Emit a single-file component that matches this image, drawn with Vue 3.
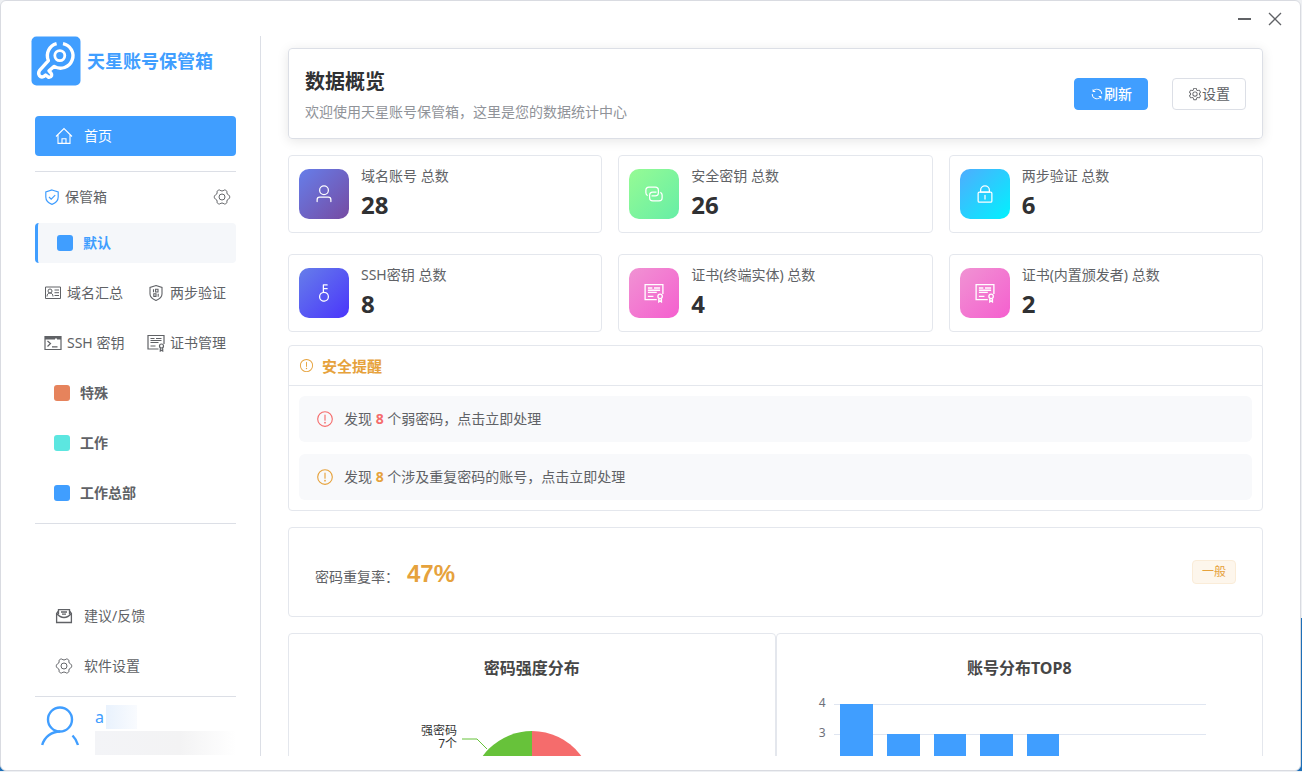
<template>
  <div class="window">
    <header class="titlebar">
      <button class="win-btn" type="button" aria-label="最小化">
        <Icon name="minus" :size="16" />
      </button>
      <button class="win-btn" type="button" aria-label="关闭">
        <Icon name="close" :size="16" />
      </button>
    </header>

    <div class="layout">
      <aside class="sidebar">
        <div class="brand">
          <svg class="logo" viewBox="0 0 50 50" aria-hidden="true">
            <rect x="0.5" y="0.5" width="49" height="49" rx="5" fill="#409eff" />
            <g fill="none" stroke="#fff" stroke-linejoin="round">
              <path
                stroke-width="3.4"
                d="M25.600 7.600A12.400 12.400 0 0 0 17.400 24.600L8.600 34.400Q6.800 37.200 8.400 39.600Q10.200 41.800 12.600 40.600L14.600 39L17.400 41.200Q19.800 41.600 20.600 39.600Q21 38.400 19.800 36.800L18 34.800L23.200 30.400A12.400 12.400 0 1 0 32 7.600"
              />
              <circle cx="28.800" cy="19.600" r="5" stroke-width="2.800" />
            </g>
          </svg>
          <span class="brand-name">天星账号保管箱</span>
        </div>

        <nav class="menu">
          <a class="menu-item home" href="#">
            <Icon name="home" :size="18" />
            <span>首页</span>
          </a>
          <hr class="divider" />

          <div class="vault-head">
            <Icon class="vault-icon" name="shield" :size="16" />
            <span>保管箱</span>
            <button class="vault-setting" type="button" aria-label="保管箱设置">
              <Icon name="gear" :size="18" />
            </button>
          </div>

          <div class="vault-list">
            <a class="vault active" href="#">
              <i class="swatch blue"></i>
              <span>默认</span>
            </a>
            <div class="shortcuts">
              <a v-for="item in shortcuts" :key="item.text" class="shortcut" href="#">
                <Icon :name="item.icon" :size="18" />
                <span>{{ item.text }}</span>
              </a>
            </div>
            <a v-for="vault in vaults" :key="vault.name" class="vault" href="#">
              <i class="swatch" :class="vault.color"></i>
              <span>{{ vault.name }}</span>
            </a>
          </div>
          <hr class="divider list-end" />

          <div class="menu-bottom">
            <a class="menu-item" href="#">
              <Icon name="mail" :size="18" />
              <span>建议/反馈</span>
            </a>
            <a class="menu-item" href="#">
              <Icon name="gear" :size="18" />
              <span>软件设置</span>
            </a>
          </div>
          <hr class="divider" />

          <div class="account">
            <Icon class="avatar" name="avatar" :size="42" />
            <div class="account-text">
              <div class="account-name">a<i class="mask-name"></i></div>
              <i class="mask-mail"></i>
            </div>
          </div>
        </nav>
      </aside>

      <main class="content">
        <section class="overview">
          <div>
            <h1>数据概览</h1>
            <p>欢迎使用天星账号保管箱，这里是您的数据统计中心</p>
          </div>
          <div class="actions">
            <button class="btn primary" type="button"><Icon name="refresh" :size="14" />刷新</button>
            <button class="btn" type="button"><Icon name="setting" :size="14" />设置</button>
          </div>
        </section>

        <section class="stats">
          <div v-for="stat in stats" :key="stat.label" class="stat">
            <div class="stat-icon" :class="stat.tone">
              <Icon :name="stat.icon" :size="20" />
            </div>
            <div>
              <div class="stat-label">{{ stat.label }} 总数</div>
              <div class="stat-value">{{ stat.value }}</div>
            </div>
          </div>
        </section>

        <section class="alerts">
          <h2><Icon name="warning" :size="15" />安全提醒</h2>
          <div class="alert-list">
            <a v-for="alert in alerts" :key="alert.text" class="alert" :class="alert.level" href="#">
              <Icon name="warning" :size="18" />
              <span>发现 <b>{{ alert.count }}</b> {{ alert.text }}</span>
            </a>
          </div>
        </section>

        <section class="rate">
          <div class="rate-text">
            <span>密码重复率：</span>
            <strong>47%</strong>
          </div>
          <span class="tag">一般</span>
        </section>

        <section class="charts">
          <div class="chart">
            <h3>密码强度分布</h3>
            <svg class="pie" width="240" height="180" viewBox="0 0 240 180">
              <path
                v-for="slice in slices"
                :key="slice.color"
                :d="slice.path"
                :fill="slice.color"
              />
              <path d="M50 59h15l10 10" fill="none" stroke="#67c23a" />
              <text x="45" y="55" text-anchor="end">强密码</text>
              <text x="45" y="68" text-anchor="end">7个</text>
            </svg>
          </div>
          <div class="chart">
            <h3>账号分布TOP8</h3>
            <div class="bar-chart">
              <div class="axis">
                <span v-for="tick in [4, 3]" :key="tick">{{ tick }}</span>
              </div>
              <div class="plot">
                <div v-for="(value, i) in topAccounts" :key="i" class="bar-slot">
                  <div class="bar" :style="{ height: value * 30 + 'px' }"></div>
                </div>
              </div>
            </div>
          </div>
        </section>
      </main>
    </div>
  </div>
</template>

<script setup>
import { h } from 'vue';

// line: stroked paths, solid: filled paths
const icons = {
  minus: { box: 16, width: 2, line: ['M1 8h13'] },
  close: { box: 16, width: 1.3, line: ['M2 2l12 12M14 2L2 14'] },
  home: {
    box: 18,
    width: 1.1,
    line: ['M1 9.500L9 1.500l8 8M3 8v8.400h12V8', 'M7 16.400v-4.600h4v4.600'],
  },
  shield: {
    box: 16,
    width: 1.2,
    line: ['M8 1L14.200 3v5c0 3.600-2.600 6-6.200 7.400C4.400 14 1.800 11.600 1.800 8V3z', 'M5 8l2.200 2.200 4-4'],
  },
  gear: {
    box: 24,
    width: 1.3,
    line: [
      'M7.500 2.800Q8.500 2.200 9.400 3.100Q12 5 14.600 3.100Q15.500 2.200 16.500 2.800L17.900 3.600Q18.800 4.200 18.400 5.400Q18.200 8.500 21 9.600Q22.200 10 22.200 11V13Q22.200 14 21 14.400Q18.200 15.500 18.400 18.600Q18.800 19.800 17.900 20.400L16.500 21.200Q15.500 21.800 14.600 20.900Q12 19 9.400 20.900Q8.500 21.800 7.500 21.200L6.100 20.400Q5.200 19.800 5.600 18.600Q5.800 15.500 3 14.400Q1.800 14 1.800 13V11Q1.800 10 3 9.600Q5.800 8.500 5.600 5.400Q5.200 4.200 6.100 3.600Z',
      'M12 8a4 4 0 1 0 0 8a4 4 0 0 0 0-8',
    ],
  },
  card: {
    box: 18,
    width: 1,
    line: [
      'M1.500 3h15v11.500h-15z',
      'M6 5a2 2 0 1 0 0 4a2 2 0 0 0 0-4M3 12.500c0-2.400 1.300-3.500 3-3.500s3 1.100 3 3.500',
      'M10.500 6h4.500M10.500 8.700h4.500M10.500 11.500h4.500',
    ],
  },
  code: {
    box: 18,
    width: 1.1,
    line: [
      'M9 1.500l6 2v6.500c0 3-2.500 5-6 6.500c-3.500-1.500-6-3.500-6-6.500V3.500z',
      'M6.500 5.200v3M8.600 5.200h2.400v2.800h-2.400zM6.800 9.800h2.200v2.600h-2.200zM11.200 9.800v3',
    ],
  },
  terminal: {
    box: 18,
    width: 1.2,
    line: ['M1 2.500h16v13H1z', 'M3.500 7l3 2.500l-3 3M8 12.800h5.500'],
    solid: ['M1 2h16v3.500h-4v-1h-2v1H1z'],
  },
  cert: {
    box: 18,
    width: 1.2,
    line: [
      'M11.500 15H1V1.500h16v8.500',
      'M3.500 4.500h4M9 4.500h5.500M3.500 6.500h11M3.500 8.500h8M3.500 12h5',
      'M14.500 10a2 2 0 1 0 0 4a2 2 0 0 0 0-4M13.300 13.800v3.200l1.200-.8l1.200.8v-3.200',
    ],
  },
  mail: {
    box: 18,
    width: 1.3,
    line: ['M3.500 4L1.600 6.500v9h14.800v-9L14.500 4', 'M1.600 6.500Q5 10.500 9 10.500T16.400 6.500', 'M3.500 7.500V2.700h11v4.800', 'M6 5h6M7 7.200h4'],
  },
  avatar: {
    box: 42,
    width: 2.4,
    line: ['M20 2.500a12 12 0 1 0 0 24a12 12 0 0 0 0-24', 'M2.200 40C4.500 32 11.500 26.500 20 26.500', 'M32.500 30.500q4 4 5.500 9.500'],
  },
  user: {
    box: 1024,
    solid: [
      'M512 512a192 192 0 1 0 0-384 192 192 0 0 0 0 384m0 64a256 256 0 1 1 0-512 256 256 0 0 1 0 512m320 320v-96a96 96 0 0 0-96-96H288a96 96 0 0 0-96 96v96a32 32 0 1 1-64 0v-96a160 160 0 0 1 160-160h448a160 160 0 0 1 160 160v96a32 32 0 1 1-64 0',
    ],
  },
  connection: {
    box: 1024,
    solid: [
      'M640 384v64H448a128 128 0 0 0-128 128v128a128 128 0 0 0 128 128h320a128 128 0 0 0 128-128V576a128 128 0 0 0-64-110.848V394.880c74.560 26.368 128 97.472 128 181.056v128a192 192 0 0 1-192 192H448a192 192 0 0 1-192-192V576a192 192 0 0 1 192-192z',
      'M384 640v-64h192a128 128 0 0 0 128-128V320a128 128 0 0 0-128-128H256a128 128 0 0 0-128 128v128a128 128 0 0 0 64 110.848v70.272A192.064 192.064 0 0 1 64 448V320a192 192 0 0 1 192-192h320a192 192 0 0 1 192 192v128a192 192 0 0 1-192 192z',
    ],
  },
  lock: {
    box: 1024,
    solid: [
      'M224 448a32 32 0 0 0-32 32v384a32 32 0 0 0 32 32h576a32 32 0 0 0 32-32V480a32 32 0 0 0-32-32zm0-64h576a96 96 0 0 1 96 96v384a96 96 0 0 1-96 96H224a96 96 0 0 1-96-96V480a96 96 0 0 1 96-96',
      'M512 544a32 32 0 0 1 32 32v192a32 32 0 1 1-64 0V576a32 32 0 0 1 32-32m192-160v-64a192 192 0 1 0-384 0v64zM512 64a256 256 0 0 1 256 256v128H256V320A256 256 0 0 1 512 64',
    ],
  },
  key: {
    box: 1024,
    solid: [
      'M448 456.064V96a32 32 0 0 1 32-32.064L672 64a32 32 0 0 1 0 64H512v128h160a32 32 0 0 1 0 64H512v128a256 256 0 1 1-64 8.064M512 896a192 192 0 1 0 0-384 192 192 0 0 0 0 384',
    ],
  },
  refresh: {
    box: 1024,
    solid: [
      'M771.776 794.880A384 384 0 0 1 128 512h64a320 320 0 0 0 555.712 216.448H654.720a32 32 0 1 1 0-64h149.056a32 32 0 0 1 32 32v148.928a32 32 0 1 1-64 0v-50.560zM276.288 295.616h92.992a32 32 0 0 1 0 64H220.160a32 32 0 0 1-32-32V178.560a32 32 0 0 1 64 0v50.560A384 384 0 0 1 896.128 512h-64a320 320 0 0 0-555.776-216.384z',
    ],
  },
  setting: {
    box: 1024,
    solid: [
      'M600.704 64a32 32 0 0 1 30.464 22.208l35.200 109.376c14.784 7.232 28.928 15.360 42.432 24.512l112.384-24.192a32 32 0 0 1 34.432 15.360L944.320 364.800a32 32 0 0 1-4.032 37.504l-77.120 85.120a357.120 357.120 0 0 1 0 49.024l77.120 85.248a32 32 0 0 1 4.032 37.504l-88.704 153.600a32 32 0 0 1-34.432 15.296L708.800 803.904c-13.440 9.088-27.648 17.280-42.368 24.512l-35.264 109.376A32 32 0 0 1 600.704 960H423.296a32 32 0 0 1-30.464-22.208L357.696 828.480a351.616 351.616 0 0 1-42.560-24.640l-112.320 24.256a32 32 0 0 1-34.432-15.360L79.680 659.200a32 32 0 0 1 4.032-37.504l77.120-85.248a357.120 357.120 0 0 1 0-48.896l-77.120-85.248A32 32 0 0 1 79.680 364.800l88.704-153.600a32 32 0 0 1 34.432-15.296l112.320 24.256c13.568-9.152 27.776-17.408 42.560-24.640l35.200-109.312A32 32 0 0 1 423.232 64H600.640zm-23.424 64H446.720l-36.352 113.088-24.512 11.968a294.113 294.113 0 0 0-34.816 20.096l-22.656 15.360-116.224-25.088-65.280 113.152 79.680 88.192-1.920 27.136a293.120 293.120 0 0 0 0 40.192l1.920 27.136-79.808 88.192 65.344 113.152 116.224-25.024 22.656 15.296a294.113 294.113 0 0 0 34.816 20.096l24.512 11.968L446.720 896h130.688l36.480-113.152 24.448-11.904a288.282 288.282 0 0 0 34.752-20.096l22.592-15.296 116.288 25.024 65.280-113.152-79.744-88.192 1.920-27.136a293.120 293.120 0 0 0 0-40.256l-1.920-27.136 79.808-88.128-65.344-113.152-116.288 24.960-22.592-15.232a287.616 287.616 0 0 0-34.752-20.096l-24.448-11.904L577.344 128zM512 320a192 192 0 1 1 0 384 192 192 0 0 1 0-384m0 64a128 128 0 1 0 0 256 128 128 0 0 0 0-256',
    ],
  },
  warning: {
    box: 1024,
    solid: [
      'M512 64a448 448 0 1 1 0 896 448 448 0 0 1 0-896m0 832a384 384 0 0 0 0-768 384 384 0 0 0 0 768m48-176a48 48 0 1 1-96 0 48 48 0 0 1 96 0m-48-464a32 32 0 0 1 32 32v288a32 32 0 0 1-64 0V288a32 32 0 0 1 32-32',
    ],
  },
};

function Icon(props) {
  const icon = icons[props.name];
  const line = (icon.line || []).map((d) =>
    h('path', { d, fill: 'none', stroke: 'currentColor', 'stroke-width': icon.width })
  );
  const solid = (icon.solid || []).map((d) => h('path', { d, fill: 'currentColor' }));
  return h(
    'svg',
    {
      class: 'icon',
      width: props.size,
      height: props.size,
      viewBox: `0 0 ${icon.box} ${icon.box}`,
      'aria-hidden': 'true',
    },
    [...line, ...solid]
  );
}
Icon.props = ['name', 'size'];

const shortcuts = [
  { icon: 'card', text: '域名汇总' },
  { icon: 'code', text: '两步验证' },
  { icon: 'terminal', text: 'SSH 密钥' },
  { icon: 'cert', text: '证书管理' },
];

const vaults = [
  { name: '特殊', color: 'orange' },
  { name: '工作', color: 'cyan' },
  { name: '工作总部', color: 'blue' },
];

const stats = [
  { label: '域名账号', value: 28, icon: 'user', tone: 'violet' },
  { label: '安全密钥', value: 26, icon: 'connection', tone: 'green' },
  { label: '两步验证', value: 6, icon: 'lock', tone: 'sky' },
  { label: 'SSH密钥', value: 8, icon: 'key', tone: 'indigo' },
  { label: '证书(终端实体)', value: 4, icon: 'cert', tone: 'pink' },
  { label: '证书(内置颁发者)', value: 2, icon: 'cert', tone: 'pink' },
];

const alerts = [
  { level: 'danger', count: 8, text: '个弱密码，点击立即处理' },
  { level: 'warn', count: 8, text: '个涉及重复密码的账号，点击立即处理' },
];

const topAccounts = [4, 3, 3, 3, 3, 2, 2, 2];

// Pie slices, in order clockwise from the top
const strength = [
  { count: 8, color: '#f56c6c' },
  { count: 13, color: '#e6a23c' },
  { count: 7, color: '#67c23a' },
];
const slices = makeSlices(strength, 120, 112, 61);

function makeSlices(items, cx, cy, r) {
  const total = items.reduce((sum, item) => sum + item.count, 0);
  let angle = -Math.PI / 2;
  return items.map((item) => {
    const end = angle + (item.count / total) * Math.PI * 2;
    const from = `${cx + r * Math.cos(angle)} ${cy + r * Math.sin(angle)}`;
    const to = `${cx + r * Math.cos(end)} ${cy + r * Math.sin(end)}`;
    angle = end;
    return { color: item.color, path: `M${cx} ${cy}L${from}A${r} ${r} 0 0 1 ${to}Z` };
  });
}
</script>

<style>
html {
  background: linear-gradient(#eef0f3 618px, #1d6fb8 618px);
}

body {
  margin: 0;
}
</style>

<style scoped>
* {
  box-sizing: border-box;
}

.window {
  display: flex;
  flex-direction: column;
  height: calc(100vh - 1px);
  margin-right: 1px;
  overflow: hidden;
  border: 1px solid #d9dbe1;
  border-radius: 6px;
  background: #fff;
  color: #606266;
  font-family: "Noto Sans", "Noto Sans CJK SC", sans-serif;
  font-size: 14px;
  line-height: 20px;
}

a {
  color: inherit;
  text-decoration: none;
}

button {
  font: inherit;
  color: inherit;
  cursor: pointer;
}

h1,
h2,
h3,
p {
  margin: 0;
}

.icon {
  display: block;
  flex: none;
}

.titlebar {
  display: flex;
  flex: none;
  justify-content: flex-end;
  gap: 14px;
  height: 35px;
  padding: 10px 17px 0 0;
}

.win-btn {
  width: 16px;
  height: 16px;
  padding: 0;
  border: 0;
  background: none;
}

.layout {
  display: flex;
  flex: 1;
  min-height: 0;
  margin-bottom: 14px;
}

/* Sidebar */
.sidebar {
  display: flex;
  flex: none;
  flex-direction: column;
  width: 260px;
  border-right: 1px solid #dcdfe6;
}

.brand {
  display: flex;
  align-items: center;
  gap: 6px;
  padding-left: 30px;
}

.logo {
  width: 50px;
  height: 50px;
}

.brand-name {
  color: #409eff;
  font-size: 18px;
  font-weight: 700;
}

.menu {
  display: flex;
  flex: 1;
  flex-direction: column;
  padding: 30px 24px 0 34px;
}

.menu-item {
  display: flex;
  align-items: center;
  gap: 11px;
  height: 40px;
  padding-left: 20px;
  border-radius: 4px;
}

.menu-item.home {
  background: #409eff;
  color: #fff;
}

.divider {
  width: 100%;
  height: 1px;
  margin: 15px 0 0;
  border: 0;
  background: #dcdfe6;
}

.divider.list-end,
.menu-bottom + .divider {
  margin-top: 10px;
}

.vault-head {
  display: flex;
  align-items: center;
  gap: 5px;
  height: 51px;
  padding: 0 5px 2px 9px;
}

.vault-icon {
  color: #409eff;
}

.vault-setting {
  margin-left: auto;
  padding: 0;
  border: 0;
  background: none;
}

.vault-list {
  display: flex;
  flex-direction: column;
  gap: 10px;
}

.vault {
  display: flex;
  align-items: center;
  gap: 10px;
  height: 40px;
  padding-left: 19px;
  border-radius: 4px;
  font-weight: 700;
}

.vault.active {
  border-left: 3px solid #409eff;
  background: #f5f7fa;
  color: #409eff;
}

.swatch {
  width: 16px;
  height: 16px;
  border-radius: 3px;
}

.swatch.blue {
  background: #409eff;
}

.swatch.orange {
  background: #e6835c;
}

.swatch.cyan {
  background: #5ce6e0;
}

.shortcuts {
  display: grid;
  grid-template-columns: 103px 1fr;
  gap: 10px 0;
  padding-left: 9px;
}

.shortcut {
  display: flex;
  align-items: center;
  gap: 5px;
  height: 40px;
  white-space: nowrap;
}

.menu-bottom {
  display: flex;
  flex-direction: column;
  gap: 10px;
  margin-top: auto;
}

.account {
  display: flex;
  gap: 13px;
  height: 59px;
  padding: 8px 0 0 5px;
}

.avatar {
  color: #409eff;
}

.account-text {
  flex: 1;
}

.account-name {
  display: flex;
  gap: 2px;
  height: 24px;
  color: #409eff;
  font-size: 16px;
  line-height: 24px;
}

.mask-name {
  width: 31px;
  background: linear-gradient(90deg, #e9f2fd, #f9fbfe);
}

.mask-mail {
  display: block;
  height: 24px;
  margin-top: 2px;
  background: linear-gradient(90deg, #f3f4f7, #f3f3f4 60%, #fff);
}

/* Content */
.content {
  flex: 1;
  min-width: 0;
  padding: 12px 37px 0 27px;
  overflow: hidden;
}

.overview {
  display: flex;
  align-items: center;
  justify-content: space-between;
  padding: 16px;
  border: 1px solid #dcdfe6;
  border-radius: 4px;
  box-shadow: 0 2px 12px rgba(0, 0, 0, 0.1);
}

.overview h1 {
  color: #303133;
  font-size: 20px;
  line-height: 34px;
}

.overview p {
  margin-top: 2px;
  color: #909399;
  line-height: 21px;
}

.actions {
  display: flex;
  gap: 24px;
}

.btn {
  display: flex;
  align-items: center;
  height: 32px;
  padding: 0 15px;
  border: 1px solid #dcdfe6;
  border-radius: 4px;
  background: #fff;
}

.btn.primary {
  border-color: #409eff;
  background: #409eff;
  color: #fff;
  font-weight: 500;
}

.stats {
  display: grid;
  grid-template-columns: repeat(3, 1fr);
  gap: 21px 16px;
  margin-top: 16px;
}

.stat {
  display: flex;
  align-items: center;
  gap: 12px;
  height: 78px;
  padding: 0 10px;
  border: 1px solid #e4e7ed;
  border-radius: 4px;
}

.stat-icon {
  display: flex;
  align-items: center;
  justify-content: center;
  width: 50px;
  height: 50px;
  border-radius: 10px;
  color: #fff;
}

.stat-icon.violet {
  background: linear-gradient(135deg, #667eea, #764ba2);
}

.stat-icon.green {
  background: linear-gradient(135deg, #96fb94, #66eea6);
}

.stat-icon.sky {
  background: linear-gradient(135deg, #4facfe, #00f2fe);
}

.stat-icon.indigo {
  background: linear-gradient(135deg, #667eea, #4a35fb);
}

.stat-icon.pink {
  background: linear-gradient(135deg, #f093d3, #f55fcf);
}

.stat-label {
  line-height: 20px;
}

.stat-value {
  margin-top: 2px;
  color: #303133;
  font-size: 24px;
  font-weight: 700;
  line-height: 34px;
}

.alerts {
  margin-top: 13px;
  border: 1px solid #e4e7ed;
  border-radius: 4px;
}

.alerts h2 {
  display: flex;
  align-items: center;
  gap: 8px;
  height: 40px;
  padding-left: 10px;
  border-bottom: 1px solid #e4e7ed;
  color: #e6a23c;
  font-size: 15px;
}

.alert-list {
  display: flex;
  flex-direction: column;
  gap: 12px;
  padding: 10px;
}

.alert {
  display: flex;
  align-items: center;
  gap: 10px;
  height: 46px;
  padding-left: 17px;
  border-radius: 6px;
  background: #f8f9fb;
}

.danger .icon,
.danger b {
  color: #f56c6c;
}

.warn .icon,
.warn b {
  color: #e6a23c;
}

.rate {
  display: flex;
  align-items: center;
  justify-content: space-between;
  height: 90px;
  margin-top: 16px;
  padding: 0 26px;
  border: 1px solid #e4e7ed;
  border-radius: 4px;
}

.rate-text {
  display: flex;
  align-items: baseline;
  gap: 8px;
  padding-top: 6px;
}

.rate-text strong {
  color: #e6a23c;
  font-family: "Liberation Sans", sans-serif;
  font-size: 24px;
}

.tag {
  height: 24px;
  padding: 0 9px;
  border: 1px solid #faecd8;
  border-radius: 4px;
  background: #fdf6ec;
  color: #e6a23c;
  font-size: 12px;
  line-height: 22px;
}

.charts {
  display: grid;
  grid-template-columns: 1fr 1fr;
  margin-top: 16px;
}

.chart {
  height: 300px;
  padding-top: 22px;
  border: 1px solid #e4e7ed;
  border-radius: 4px;
}

.chart h3 {
  color: #464646;
  font-size: 16px;
  line-height: 24px;
  text-align: center;
}

.pie {
  display: block;
  margin: 0 auto;
}

.pie text {
  fill: #333;
  font-size: 12px;
}

.bar-chart {
  display: flex;
  gap: 8px;
  margin-top: 24px;
  padding: 0 56px 0 39px;
}

.axis {
  width: 10px;
  margin-top: -16px;
  color: #6e7079;
  font-size: 12px;
  line-height: 30px;
  text-align: right;
}

.axis span {
  display: block;
}

.plot {
  display: flex;
  flex: 1;
  align-items: flex-end;
  height: 120px;
  background: repeating-linear-gradient(#e0e6f1 0 1px, transparent 1px 30px);
}

.bar-slot {
  display: flex;
  flex: 1;
  justify-content: center;
}

.bar {
  width: 70%;
  background: #409eff;
}
</style>
